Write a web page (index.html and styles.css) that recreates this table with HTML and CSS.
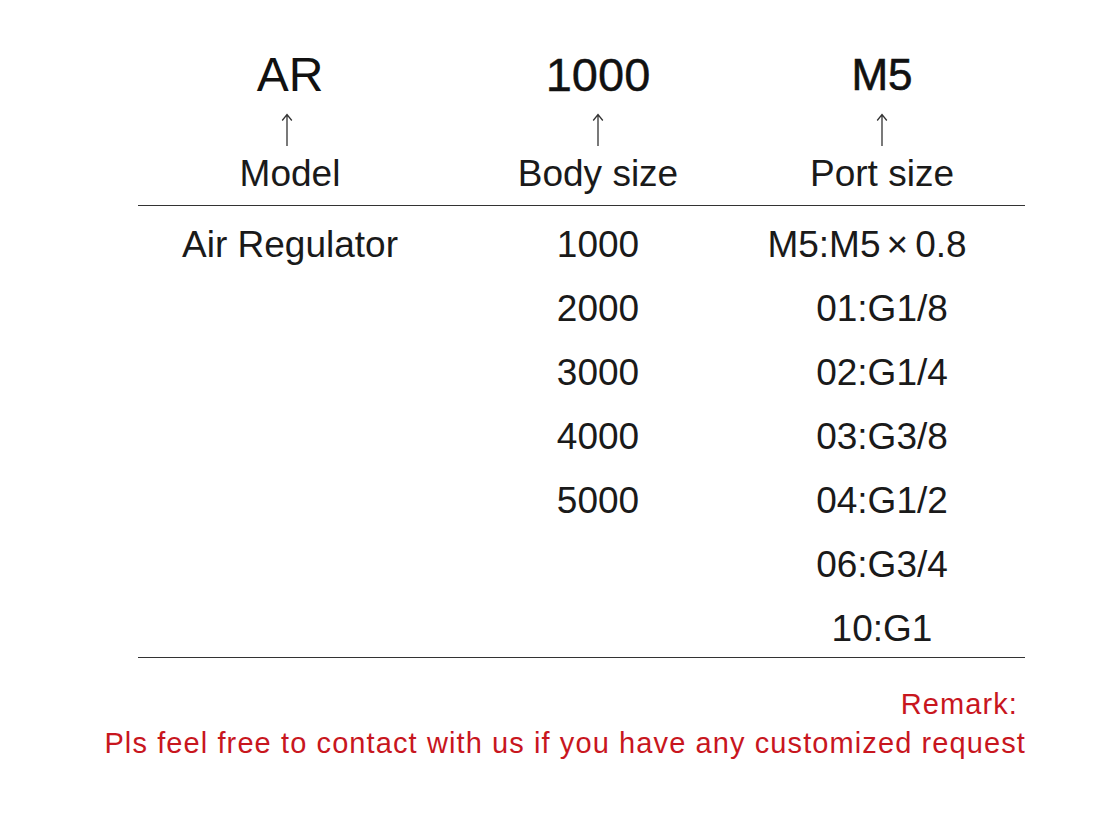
FILE: index.html
```html
<!DOCTYPE html>
<html lang="en">
<head>
<meta charset="utf-8">
<title>AR Air Regulator ordering code</title>
<link rel="stylesheet" href="styles.css">
</head>
<body>
<div class="sheet">
  <div class="cols head">
    <div class="hcol">
      <div class="code code-ar">AR</div>
      <div class="arrow arrow-model"><svg width="14" height="34" viewBox="0 0 14 34"><path d="M7 1.5V33M2.2 7.5L7 1.5L11.8 7.5" fill="none" stroke="#333" stroke-width="1.3"/></svg></div>
      <div class="label">Model</div>
    </div>
    <div class="hcol">
      <div class="code code-size">1000</div>
      <div class="arrow"><svg width="14" height="34" viewBox="0 0 14 34"><path d="M7 1.5V33M2.2 7.5L7 1.5L11.8 7.5" fill="none" stroke="#333" stroke-width="1.3"/></svg></div>
      <div class="label">Body size</div>
    </div>
    <div class="hcol">
      <div class="code code-port">M5</div>
      <div class="arrow"><svg width="14" height="34" viewBox="0 0 14 34"><path d="M7 1.5V33M2.2 7.5L7 1.5L11.8 7.5" fill="none" stroke="#333" stroke-width="1.3"/></svg></div>
      <div class="label">Port size</div>
    </div>
  </div>
  <div class="rule"></div>
  <div class="cols body-rows">
    <div class="list">
      <div class="item">Air Regulator</div>
    </div>
    <div class="list">
      <div class="item">1000</div>
      <div class="item">2000</div>
      <div class="item">3000</div>
      <div class="item">4000</div>
      <div class="item">5000</div>
    </div>
    <div class="list">
      <div class="item item-wide">M5:M5<span class="times">×</span>0.8</div>
      <div class="item">01:G1/8</div>
      <div class="item">02:G1/4</div>
      <div class="item">03:G3/8</div>
      <div class="item">04:G1/2</div>
      <div class="item">06:G3/4</div>
      <div class="item">10:G1</div>
    </div>
  </div>
  <div class="rule rule-bottom"></div>
  <div class="remark">
    <div class="remark-title">Remark:</div>
    <div class="remark-text">Pls feel free to contact with us if you have any customized request</div>
  </div>
</div>
</body>
</html>
```
FILE: styles.css
```css
html, body {
  margin: 0;
  padding: 0;
  background: #ffffff;
}

body {
  font-family: "Liberation Sans", Arial, sans-serif;
  color: #151515;
}

.sheet {
  width: 887px;
  margin-left: 138px;
  padding-top: 47px;
}

.cols {
  display: grid;
  grid-template-columns: 304px 312px 256px;
}

.hcol {
  display: flex;
  flex-direction: column;
  align-items: center;
}

.code {
  height: 56px;
  line-height: 56px;
  font-size: 48px;
  color: #111;
}

.code-size {
  font-size: 47px;
  -webkit-text-stroke: 0.4px #111;
}

.code-port {
  font-size: 44px;
  -webkit-text-stroke: 0.6px #111;
}

.arrow {
  height: 48px;
  display: flex;
  align-items: flex-start;
  justify-content: center;
  padding-top: 10px;
  box-sizing: border-box;
}

.arrow svg {
  display: block;
}

.arrow-model {
  margin-right: 6px;
}

.label {
  height: 46px;
  line-height: 46px;
  font-size: 37px;
  color: #1a1a1a;
}

.rule {
  height: 1px;
  background: #333;
  margin-top: 8px;
}

.body-rows {
  padding-top: 7px;
}

.list {
  display: flex;
  flex-direction: column;
}

.item {
  height: 64px;
  line-height: 64px;
  font-size: 37px;
  text-align: center;
  color: #1a1a1a;
  white-space: nowrap;
}

.item-wide {
  padding-right: 30px;
}

.times {
  margin: 0 7px 0 6px;
}

.rule-bottom {
  margin-top: -4px;
}

.remark {
  display: flex;
  flex-direction: column;
  align-items: flex-end;
  margin-top: 26px;
  color: #c8161e;
  font-size: 29px;
  letter-spacing: 1.1px;
  white-space: nowrap;
}

.remark-title {
  height: 40px;
  line-height: 40px;
  margin-right: 7px;
}

.remark-text {
  height: 38px;
  line-height: 38px;
  margin-right: -1px;
}
```
